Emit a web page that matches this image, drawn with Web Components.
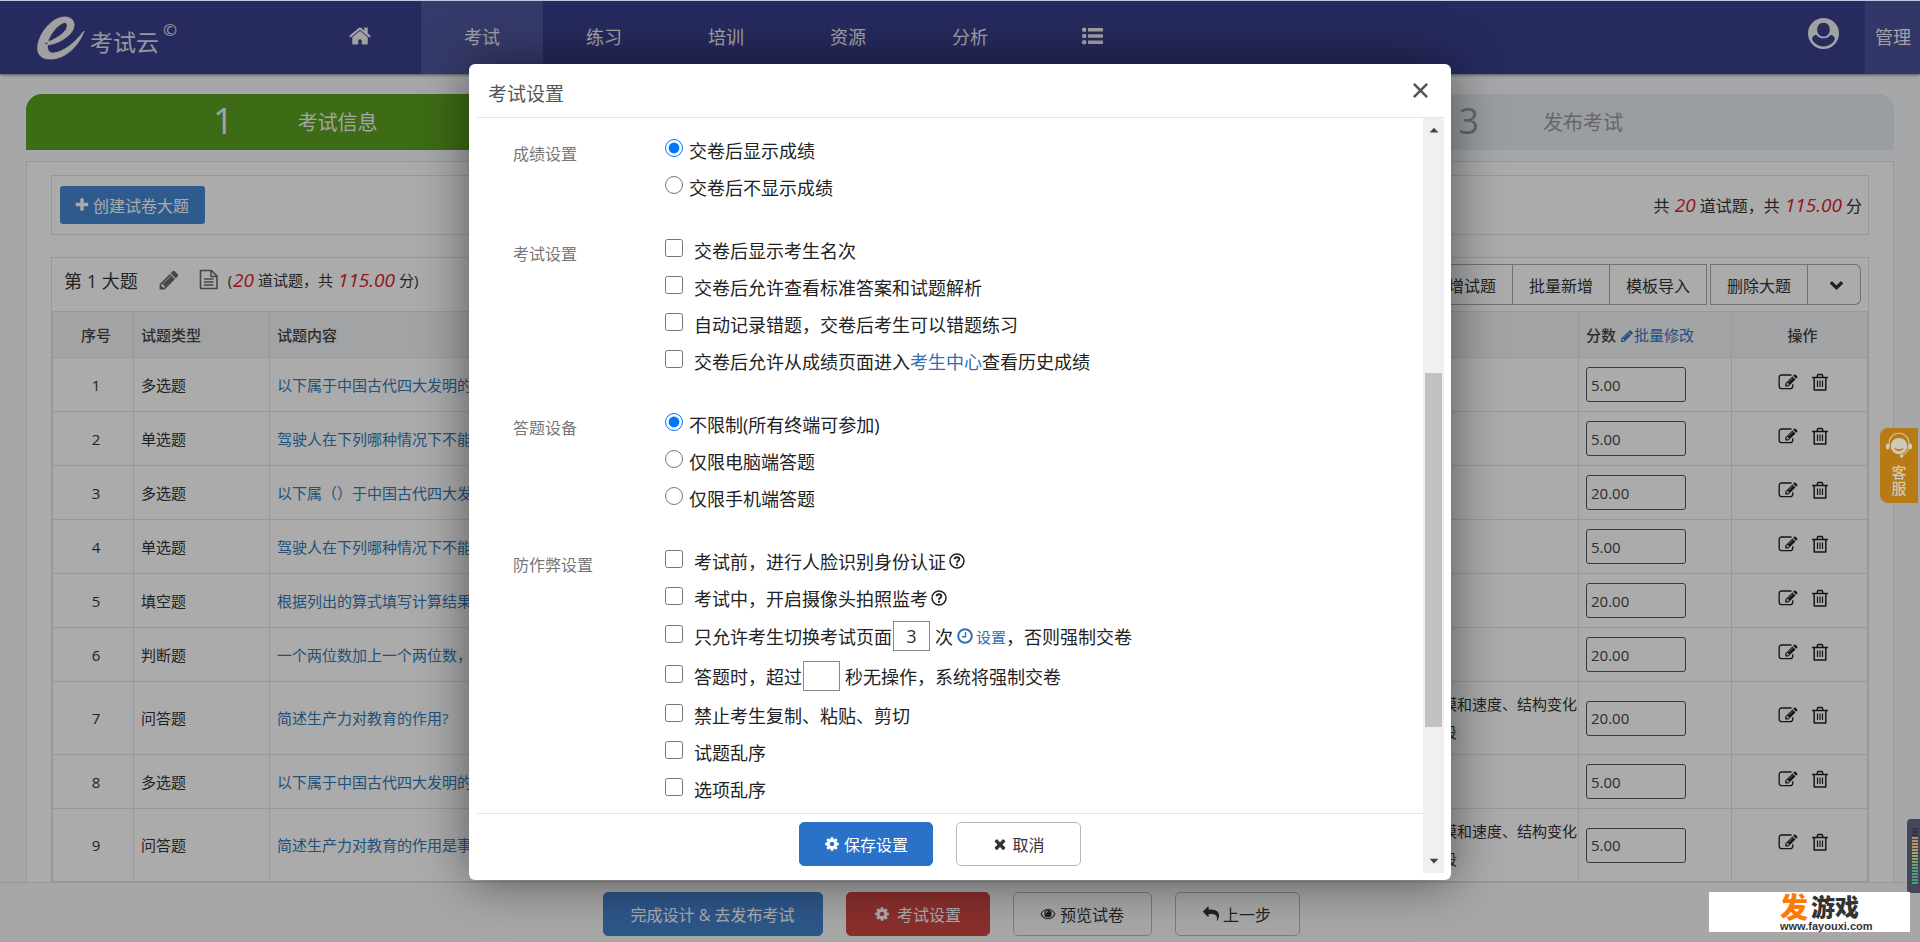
<!DOCTYPE html>
<html lang="zh-CN">
<head>
<meta charset="utf-8">
<title>考试云 - 考试设置</title>
<style>
  html, body { margin: 0; height: 100%; overflow: hidden; }
  body { font-family: "Open Sans", "Noto Sans CJK SC", sans-serif; font-size: 15px; color: #333; }
</style>
</head>
<body>
<exam-app></exam-app>

<script>
const define = (name, html, setup) => {
  const tpl = document.createElement('template');
  tpl.innerHTML = html;
  customElements.define(name, class extends HTMLElement {
    connectedCallback() {
      if (this.shadowRoot) return;
      const root = this.attachShadow({ mode: 'open' });
      root.append(tpl.content.cloneNode(true));
      if (setup) setup(this, root);
    }
  });
};

/* ---------- icons ---------- */
const ICONS = {
  home: '<path d="M1472 992v480q0 26-19 45t-45 19h-384v-384h-256v384h-384q-26 0-45-19t-19-45v-480q0-1 .5-3t.5-3l575-474 575 474q1 2 1 6zm223-69l-62 74q-8 9-21 11h-3q-13 0-21-7l-692-577-692 577q-12 8-24 7-13-2-21-11l-62-74q-8-10-7-23.5t11-21.5l719-599q32-26 76-26t76 26l244 204v-195q0-14 9-23t23-9h192q14 0 23 9t9 23v408l219 182q10 8 11 21.5t-7 23.5z"/>',
  plus: '<path d="M1600 736v192q0 40-28 68t-68 28h-416v416q0 40-28 68t-68 28h-192q-40 0-68-28t-28-68v-416h-416q-40 0-68-28t-28-68v-192q0-40 28-68t68-28h416v-416q0-40 28-68t68-28h192q40 0 68 28t28 68v416h416q40 0 68 28t28 68z"/>',
  pencil: '<path d="M491 1536l91-91-235-235-91 91v107h128v128h107zm523-928q0-22-22-22-10 0-17 7l-542 542q-7 7-7 17 0 22 22 22 10 0 17-7l542-542q7-7 7-17zm-54-192l416 416-832 832h-416v-416zm683 96q0 53-37 90l-166 166-416-416 166-165q36-38 90-38 53 0 91 38l235 234q37 39 37 91z"/>',
  cog: '<path d="M1152 896q0-106-75-181t-181-75-181 75-75 181 75 181 181 75 181-75 75-181zm512-109v222q0 12-8 23t-20 13l-185 28q-19 54-39 91 35 50 107 138 10 12 10 25t-9 23q-27 37-99 108t-94 71q-12 0-26-9l-138-108q-44 23-91 38-16 136-29 186-7 28-36 28h-222q-14 0-24.5-8.5t-11.5-21.5l-28-184q-49-16-90-37l-141 107q-10 9-25 9-14 0-25-11-126-114-165-168-7-10-7-23 0-12 8-23 15-21 51-66.5t54-70.5q-27-50-41-99l-183-27q-13-2-21-12.5t-8-23.5v-222q0-12 8-23t19-13l186-28q14-46 39-92-40-57-107-138-10-12-10-24 0-10 9-23 26-36 98.5-107.5t94.5-71.5q13 0 26 10l138 107q44-23 91-38 16-136 29-186 7-28 36-28h222q14 0 24.5 8.5t11.5 21.5l28 184q49 16 90 37l142-107q9-9 24-9 13 0 25 10 129 119 165 170 7 8 7 22 0 12-8 23-15 21-51 66.5t-54 70.5q26 50 41 98l183 28q13 2 21 12.5t8 23.5z"/>',
  times: '<path d="M1490 1322q0 40-28 68l-136 136q-28 28-68 28t-68-28l-294-294-294 294q-28 28-68 28t-68-28l-136-136q-28-28-28-68t28-68l294-294-294-294q-28-28-28-68t28-68l136-136q28-28 68-28t68 28l294 294 294-294q28-28 68-28t68 28l136 136q28 28 28 68t-28 68l-294 294 294 294q28 28 28 68z"/>',
  reply: '<g transform="translate(1792 0) scale(-1 1)"><path d="M1792 640q0 26-19 45l-512 512q-19 19-45 19t-45-19-19-45v-256h-224q-98 0-175.500 6t-154 21.500-133 42.500-105.500 69.500-80 101-48.500 138.500-17.500 181q0 55 5 123 0 6 2.500 23.500t2.500 26.500q0 15-8.500 25t-23.500 10q-16 0-28-17-7-9-13-22t-13.500-30-10.500-24q-127-285-127-451 0-199 53-333 162-403 875-403h224v-256q0-26 19-45t45-19 45 19l512 512q19 19 19 45z"/></g>',
  edit: '<path d="M888 1184l116-116-152-152-116 116v56h96v96h56zm440-720q-16-16-33 1l-350 350q-17 17-1 33t33-1l350-350q17-17 1-33zm80 594v190q0 119-84.500 203.500t-203.500 84.500h-832q-119 0-203.500-84.500t-84.500-203.500v-832q0-119 84.500-203.500t203.500-84.500h832q63 0 117 25 15 7 18 23 3 17-9 29l-49 49q-14 14-32 8-23-6-45-6h-832q-66 0-113 47t-47 113v832q0 66 47 113t113 47h832q66 0 113-47t47-113v-126q0-13 9-22l64-64q15-15 35-7t20 29zm-96-738l288 288-672 672h-288v-288zm444 132l-92 92-288-288 92-92q28-28 68-28t68 28l152 152q28 28 28 68t-28 68z"/>',
  list: '<g transform="scale(89.6)"><circle cx="2.200" cy="3.800" r="2.300"/><circle cx="2.200" cy="10" r="2.300"/><circle cx="2.200" cy="16.200" r="2.300"/><rect x="6" y="2" width="15" height="3.600" rx=".5"/><rect x="6" y="8.200" width="15" height="3.600" rx=".5"/><rect x="6" y="14.400" width="15" height="3.600" rx=".5"/></g>',
  trash: '<g transform="scale(99.5)" fill="none" stroke="currentColor" stroke-width="1.500"><path d="M1 4.500h16M3.200 4.500V17h11.600V4.500M6 4.200L6.800 1.500h4.400L12 4.200" stroke-linejoin="round"/><path d="M6.500 7.500v6.500M9 7.500v6.500M11.500 7.500v6.500" stroke-width="1.200"/></g>',
  doc: '<g transform="scale(89.6)" fill="none" stroke="currentColor" stroke-width="1.600"><path d="M1.500 1h11l5.500 5.500V19H1.500zM12 1v6h6" stroke-linejoin="round"/><path d="M5 9.500h9.500M5 12.500h9.500M5 15.500h9.500"/></g>',
  question: '<g transform="scale(112)" fill="none" stroke="currentColor" stroke-width="1.500"><circle cx="8" cy="8" r="7"/><path d="M5.600 6.200C5.700 3.500 10.300 3.500 10.300 6.200 10.300 7.800 8 7.900 8 9.800" stroke-width="1.900"/><path d="M8 10.800v1.900" stroke-width="2"/></g>',
  clock: '<g transform="scale(112)" fill="none" stroke="currentColor" stroke-width="2"><circle cx="8" cy="8" r="6.800"/><path d="M8.500 4v4.800H5" stroke-width="1.400"/></g>',
  eye: '<g transform="scale(99.5)"><path d="M9 3C5 3 2 5.500.5 9 2 12.500 5 15 9 15s7-2.500 8.500-6C16 5.500 13 3 9 3zm0 1.300c3.200 0 5.700 1.800 7.100 4.700-1.400 2.900-3.900 4.700-7.100 4.700S3.300 11.900 1.900 9C3.300 6.100 5.800 4.300 9 4.300z"/><circle cx="9" cy="8.600" r="4.200"/><path d="M6.500 8.500A2.600 2.600 0 0 1 9 6" fill="none" stroke="#fff" stroke-width=".9"/></g>',
  user: '<g transform="scale(56)"><path fill-rule="evenodd" d="M16 0a16 16 0 1 0 0 32 16 16 0 0 0 0-32zM8 26.600C3 23 3 19 8.500 17.300 10.500 20 13 21 16 21s5.500-1 7.500-3.700C29 19 29 23 24 26.600 19 30.200 13 30.200 8 26.600zM16 5c4 0 6.500 3 6.500 7s-2.500 7-6.500 7-6.500-3-6.500-7S12 5 16 5z"/></g>',
  chevron: '<path d="M300 660L896 1240 1492 660" fill="none" stroke="currentColor" stroke-width="340"/>',
  close: '<path d="M200 200L1592 1592M1592 200L200 1592" fill="none" stroke="currentColor" stroke-width="270"/>',
  up: '<path d="M100 1350L896 500 1692 1350z"/>',
  down: '<path d="M100 500L896 1350 1692 500z"/>',
  headset: '<g transform="scale(59.700)"><circle cx="15" cy="14" r="9.500"/><path d="M9 16c3 5 9 5 12 0-4 2-8 2-12 0z" fill="#b87a12"/><path d="M4 14a11.500 11.500 0 1 1 22 0c0 6-4 10-8 11" fill="none" stroke="currentColor" stroke-width="1.300"/><rect x="0" y="11" width="4" height="7" rx="2"/><rect x="26" y="11" width="4" height="7" rx="2"/><circle cx="18" cy="25.500" r="2"/></g>'
};
define('ex-icon', `
<style>
  :host { display: inline-block; flex: none; width: 16px; height: 16px; white-space: normal; }
  svg { display: block; width: 100%; height: 100%; overflow: visible; }
</style>
<svg viewBox="0 0 1792 1792" fill="currentColor" aria-hidden="true"></svg>`,
(host, root) => { root.querySelector('svg').innerHTML = ICONS[host.getAttribute('name')]; });

/* ---------- top navigation ---------- */
define('nav-item', `
<style>
  :host { display: block; flex: none; width: 122px; }
  a { display: flex; align-items: center; justify-content: center; box-sizing: border-box; height: 73px; padding-bottom: 3px; font-size: 18px; color: #f2f2f4; text-decoration: none; }
  :host([active]) a { background: #51579f; }
</style>
<a href="#"><slot></slot></a>`);

define('top-nav', `
<style>
  :host { display: block; flex: none; position: relative; background: #393f8d; color: #f2f2f4; border-top: 1px solid #b7cde6; box-shadow: 0 1px 3px rgba(0,0,0,.5); }
  nav { display: flex; align-items: center; height: 73px; }
  .brand { display: flex; align-items: center; width: 299px; padding-left: 36px; box-sizing: border-box; height: 73px; }
  .brand svg { width: 50px; height: 44px; }
  .brand b { font-size: 23px; font-weight: 400; margin: 8px 0 0 4px; line-height: 30px; color: #e0e1ea; }
  .brand sup { font-size: 17px; font-weight: 600; line-height: 20px; margin: -16px 0 0 4px; color: #d8d9e6; }
  .space { flex: 1; }
  .user { color: #f2f2f4; margin: 0 26px 8px 0; height: 31px; }
  .manage { display: flex; align-items: center; box-sizing: border-box; height: 73px; padding: 0 9px 3px 10px; background: #4c529a; color: #f2f2f4; font-size: 18px; text-decoration: none; }
</style>
<nav>
  <div class="brand">
    <svg viewBox="0 0 50 44" fill="#f0f0f0"><path fill-rule="evenodd" stroke="#f0f0f0" stroke-width=".8" d="M8 27C13 26 23 22 29 15 33 10 31 5 27 7 20 10 13 20 12 26 10 33 13 38 18 37 27 36 39 27 48 15 45 25 33 42 16 43 5 44 0 38 2 28 5 14 18 0 30 1 40 2 40 12 34 18 28 24 20 28 11 29z"/></svg>
    <b>考试云</b><sup>©</sup>
  </div>
  <nav-item><ex-icon name="home" style="width:24px;height:24px"></ex-icon></nav-item>
  <nav-item active>考试</nav-item>
  <nav-item>练习</nav-item>
  <nav-item>培训</nav-item>
  <nav-item>资源</nav-item>
  <nav-item>分析</nav-item>
  <nav-item><ex-icon name="list" style="width:24px;height:20px"></ex-icon></nav-item>
  <span class="space"></span>
  <ex-icon class="user" name="user" style="width:31px"></ex-icon>
  <a class="manage" href="#">管理</a>
</nav>`);

/* ---------- wizard steps ---------- */
define('step-bar', `
<style>
  :host { display: flex; height: 56px; margin-top: 20px; border-radius: 16px 16px 0 0; overflow: hidden; background: #e6ebf0; }
  div { flex: 1; display: flex; align-items: center; justify-content: center; gap: 64px; padding: 2px 84px 0 0; box-sizing: border-box; color: #999; font-size: 20px; line-height: 24px; }
  b { font-size: 36px; font-weight: 400; line-height: 50px; margin-bottom: 4px; }
  .on { background: #5ba021; color: #f4f4f4; }
</style>
<div class="on"><b>1</b>考试信息</div>
<div class="on"><b>2</b>设计试卷</div>
<div><b>3</b>发布考试</div>`);

/* ---------- question table ---------- */
const ROWS = [
  ['多选题', '以下属于中国古代四大发明的是', '5.00'],
  ['单选题', '驾驶人在下列哪种情况下不能', '5.00'],
  ['多选题', '以下属（）于中国古代四大发明', '20.00'],
  ['单选题', '驾驶人在下列哪种情况下不能', '5.00'],
  ['填空题', '根据列出的算式填写计算结果', '20.00'],
  ['判断题', '一个两位数加上一个两位数，', '20.00'],
  ['问答题', '简述生产力对教育的作用?', '20.00', '规模和速度、结构变化阶段'],
  ['多选题', '以下属于中国古代四大发明的是', '5.00'],
  ['问答题', '简述生产力对教育的作用是事', '5.00', '规模和速度、结构变化阶段']
];
define('question-table', `
<style>
  :host { display: block; }
  table { width: 100%; table-layout: fixed; border-collapse: collapse; font-size: 15px; }
  th, td { border: 1px solid #e2e3e4; padding: 0 1px 0 7px; text-align: left; line-height: 28px; }
  th { background: #f1f3f5; font-weight: 500; height: 45px; color: #444; }
  td { height: 53px; }
  tr.tall td { height: 72px; }
  th:first-child, td:first-child, th:last-child, td:last-child { text-align: center; }
  .c1 { width: 81px; } .c2 { width: 136px; } .c4 { width: 159px; } .c5 { width: 153px; } .c6 { width: 136px; }
  a { color: #337ab7; text-decoration: none; }
  td.q { white-space: nowrap; overflow: hidden; }
  th a { color: #3577c8; font-weight: 400; }
  th ex-icon { width: 14px; height: 14px; vertical-align: -2px; }
  input { display: block; box-sizing: border-box; width: 100px; height: 35px; border: 1px solid #555; border-radius: 3px; padding: 0 4px; background: transparent; font: inherit; color: #444; outline: 0; }
  .ops { display: flex; justify-content: center; gap: 13px; padding: 0 0 4px 2px; }
  button { padding: 0; border: 0; background: none; color: #222; display: block; height: 20px; }
  button ex-icon { width: 20px; height: 19px; }
  button.del ex-icon { width: 18px; height: 18px; }
</style>
<table>
  <colgroup><col class="c1"><col class="c2"><col><col class="c4"><col class="c5"><col class="c6"></colgroup>
  <thead><tr><th>序号</th><th>试题类型</th><th>试题内容</th><th></th><th>分数 <a href="#"><ex-icon name="pencil"></ex-icon>批量修改</a></th><th>操作</th></tr></thead>
  <tbody></tbody>
</table>`,
(host, root) => {
  root.querySelector('tbody').innerHTML = ROWS.map(([type, text, score, note], i) => `
    <tr${note ? ' class="tall"' : ''}><td>${i + 1}</td><td>${type}</td><td class="q"><a href="#">${text}</a></td><td>${note || ''}</td>
    <td><input type="text" value="${score}" aria-label="第${i + 1}题分数"></td>
    <td><div class="ops"><button type="button" aria-label="编辑"><ex-icon name="edit"></ex-icon></button><button type="button" class="del" aria-label="删除"><ex-icon name="trash"></ex-icon></button></div></td></tr>`).join('');
});

define('paper-section', `
<style>
  :host { display: block; margin-top: 22px; border: 1px solid #e2e3e4; }
  header { display: flex; justify-content: space-between; height: 53px; padding: 0 7px 0 12px; }
  .title { display: flex; align-items: center; height: 43px; white-space: pre; }
  .title strong { font-size: 18px; font-weight: 400; margin-right: 20px; }
  .title ex-icon { width: 22px; height: 22px; color: #6a6a6a; margin-right: 19px; }
  .title ex-icon.doc { width: 20px; height: 21px; margin-right: 9px; }
  em { font-size: 19px; color: #e0202c; margin: 0 4px 0 1px; }
  .tools { display: flex; margin-top: 6px; height: 41px; }
  .tools button { box-sizing: border-box; height: 41px; padding: 0 16px; border: 1px solid #aaa; border-left-width: 0; background: none; font: inherit; font-size: 16px; color: #333; }
  .tools .first { border-left-width: 1px; }
  .tools .gap { border-left-width: 1px; margin-left: 3px; }
  .tools .more { width: 53px; padding: 0 14px 0 20px; border-radius: 0 6px 6px 0; }
  .more ex-icon { width: 17px; height: 17px; display: block; }
</style>
<header>
  <div class="title"><strong>第 1 大题</strong><ex-icon name="pencil"></ex-icon><ex-icon class="doc" name="doc"></ex-icon>(<em>20</em>道试题，共 <em>115.00</em>分)</div>
  <div class="tools"><button type="button" class="first">新增试题</button><button type="button">批量新增</button><button type="button">模板导入</button><button type="button" class="gap">删除大题</button><button type="button" class="more" aria-label="更多"><ex-icon name="chevron"></ex-icon></button></div>
</header>
<slot></slot>`);

define('paper-panel', `
<style>
  :host { display: block; margin-top: 11px; padding: 13px 24px 0; background: #fff; border: 1px solid #dde0e4; }
  .bar { display: flex; align-items: center; justify-content: space-between; box-sizing: border-box; height: 60px; border: 1px solid #e2e3e4; padding: 0 6px 0 8px; font-size: 16px; }
  .bar button { display: flex; align-items: center; gap: 3px; height: 38px; padding: 0 16px 0 14px; border: 0; border-radius: 3px; background: #4687d4; color: #fff; font: inherit; }
  em { font-size: 19px; color: #e0202c; margin: 0 4px 0 1px; }
</style>
<div class="bar">
  <button type="button"><ex-icon name="plus"></ex-icon>创建试卷大题</button>
  <span>共 <em>20</em>道试题，共 <em>115.00</em>分</span>
</div>
<slot></slot>`);

/* ---------- push buttons shared by the footer and the dialog ---------- */
define('push-button', `
<style>
  :host { display: block; }
  button { display: flex; align-items: center; justify-content: center; box-sizing: border-box; width: 100%; height: 44px; padding: 0; gap: 4px; border: 1px solid #b8b8b8; border-radius: 5px; background: #fff; color: #333; font: inherit; font-size: 16px; white-space: nowrap; }
  :host([kind=primary]) button { background: #2a72c8; border-color: #2a72c8; color: #fff; }
  :host([kind=soft]) button { background: #4380cc; border-color: #4380cc; color: #fff; }
  :host([kind=danger]) button { background: #cc4643; border-color: #cc4643; color: #fff; gap: 7px; }
  :host([kind=clear]) button { background: none; }
</style>
<button type="button"><slot></slot></button>`);

define('page-footer', `
<style>
  :host { display: flex; justify-content: center; gap: 23px; box-sizing: border-box; flex: none; position: relative; height: 60px; padding: 9px 18px 0 0; border-top: 1px solid #e2e2e2; background: #fafafa; }
</style>
<push-button kind="soft" style="width:220px">完成设计 &amp; 去发布考试</push-button>
<push-button kind="danger" style="width:144px"><ex-icon name="cog"></ex-icon>考试设置</push-button>
<push-button kind="clear" style="width:139px"><ex-icon name="eye"></ex-icon>预览试卷</push-button>
<push-button kind="clear" style="width:125px"><ex-icon name="reply"></ex-icon>上一步</push-button>`);

/* ---------- settings dialog ---------- */
define('settings-group', `
<style>
  :host { display: flex; }
  .name { width: 152px; padding-top: 4px; font-size: 16px; line-height: 37px; color: #777; }
</style>
<div class="name"></div><div><slot></slot></div>`,
(host, root) => {
  host.setAttribute('role', 'group');
  host.setAttribute('aria-label', host.getAttribute('label'));
  root.querySelector('.name').textContent = host.getAttribute('label');
});

define('scroll-track', `
<style>
  :host { display: flex; flex-direction: column; align-items: center; flex: none; width: 21px; background: #f0f0f0; color: #444; }
  ex-icon { width: 10px; height: 10px; margin: 7px 0; }
  .before { flex: 231; } .thumb { flex: 354; width: 17px; background: #c1c1c1; } .after { flex: 122; }
</style>
<ex-icon name="up"></ex-icon><span class="before"></span><span class="thumb"></span><span class="after"></span><ex-icon name="down"></ex-icon>`);

define('settings-dialog', `
<style>
  :host { position: absolute; top: 64px; bottom: 62px; left: 50%; width: 982px; margin-left: -491px; display: flex; flex-direction: column; box-sizing: border-box; padding: 0 7px 7px 8px; background: #fff; border-radius: 6px; box-shadow: 1px 1px 50px rgba(0,0,0,.5); }
  header { display: flex; align-items: center; justify-content: space-between; flex: none; height: 54px; padding: 6px 15px 0 11px; box-sizing: border-box; font-size: 19px; line-height: 26px; color: #555; border-bottom: 1px solid #e5e5e5; }
  header button { border: 0; padding: 0 0 6px; background: none; color: #555; }
  header ex-icon { width: 17px; height: 17px; display: block; }
  .body { flex: 1; display: flex; min-height: 0; }
  .main { flex: 1; display: flex; flex-direction: column; }
  form { flex: 1; min-height: 0; overflow: hidden; display: flex; flex-direction: column; gap: 26px; padding: 14px 0 0 36px; }
  label { display: flex; align-items: center; box-sizing: border-box; height: 37px; padding-bottom: 2px; font-size: 18px; color: #222; white-space: nowrap; }
  label.wide { height: 40px; }
  label > input { width: 18px; height: 18px; margin: 0 11px 4px 0; flex: none; }
  label > input[type=radio] { margin-right: 6px; }
  label > input.num { box-sizing: border-box; width: 37px; height: 30px; margin: 0 5px 0 1px; border: 1px solid #888; padding: 0; text-align: center; font: inherit; color: #333; outline: 0; }
  label > ex-icon { margin-left: 3px; }
  a { color: #2f70b5; text-decoration: none; }
  a.set { display: flex; align-items: center; gap: 3px; margin-left: 4px; font-size: 15px; }
  footer { display: flex; justify-content: center; gap: 23px; flex: none; height: 60px; box-sizing: border-box; padding: 8px 20px 0 0; border-top: 1px solid #e5e5e5; }
</style>
<header>考试设置<button type="button" aria-label="关闭"><ex-icon name="close"></ex-icon></button></header>
<div class="body">
  <div class="main">
    <form>
      <settings-group label="成绩设置">
        <label><input type="radio" name="score" checked>交卷后显示成绩</label>
        <label><input type="radio" name="score">交卷后不显示成绩</label>
      </settings-group>
      <settings-group label="考试设置">
        <label><input type="checkbox">交卷后显示考生名次</label>
        <label><input type="checkbox">交卷后允许查看标准答案和试题解析</label>
        <label><input type="checkbox">自动记录错题，交卷后考生可以错题练习</label>
        <label><input type="checkbox">交卷后允许从成绩页面进入<a href="#">考生中心</a>查看历史成绩</label>
      </settings-group>
      <settings-group label="答题设备">
        <label><input type="radio" name="device" checked>不限制(所有终端可参加)</label>
        <label><input type="radio" name="device">仅限电脑端答题</label>
        <label><input type="radio" name="device">仅限手机端答题</label>
      </settings-group>
      <settings-group label="防作弊设置">
        <label><input type="checkbox">考试前，进行人脸识别身份认证<ex-icon name="question"></ex-icon></label>
        <label><input type="checkbox">考试中，开启摄像头拍照监考<ex-icon name="question"></ex-icon></label>
        <label class="wide"><input type="checkbox">只允许考生切换考试页面<input class="num" type="text" value="3" aria-label="切换次数">次<a class="set" href="#"><ex-icon name="clock"></ex-icon>设置</a>，否则强制交卷</label>
        <label class="wide"><input type="checkbox">答题时，超过<input class="num" type="text" value="" aria-label="无操作秒数">秒无操作，系统将强制交卷</label>
        <label><input type="checkbox">禁止考生复制、粘贴、剪切</label>
        <label><input type="checkbox">试题乱序</label>
        <label><input type="checkbox">选项乱序</label>
      </settings-group>
    </form>
    <footer>
      <push-button kind="primary" style="width:134px"><ex-icon name="cog"></ex-icon>保存设置</push-button>
      <push-button style="width:125px"><ex-icon name="times"></ex-icon>取消</push-button>
    </footer>
  </div>
  <scroll-track></scroll-track>
</div>`);

/* ---------- floating widgets ---------- */
define('service-badge', `
<style>
  :host { position: absolute; right: 2px; top: 428px; width: 38px; height: 75px; box-sizing: border-box; padding-top: 6px; border-radius: 8px 0 0 8px; background: #b87a12; color: #d0c8b8; display: flex; flex-direction: column; align-items: center; gap: 4px; font-size: 15px; line-height: 16px; font-weight: 500; }
  ex-icon { width: 28px; height: 26px; }
  span { width: 15px; }
</style>
<ex-icon name="headset"></ex-icon><span>客服</span>`);

define('level-meter', `
<style>
  :host { position: absolute; right: 0; top: 819px; width: 13px; height: 74px; box-sizing: border-box; padding: 9px 2px 8px 5px; border-radius: 4px 0 0 4px; background: #454659; }
  div { height: 100%; background: repeating-linear-gradient(transparent 0 2px, #454659 2px 3px), linear-gradient(#33344a 0 15%, #b98f60 16%, #a9a860 45%, #4fa27c 75%, #3ba08a); }
</style>
<div></div>`);

define('site-mark', `
<style>
  :host { position: absolute; right: 10px; bottom: 10px; width: 201px; height: 40px; box-sizing: border-box; padding-left: 71px; background: #fff; }
  .name { display: flex; align-items: center; gap: 3px; height: 28px; padding-top: 1px; box-sizing: border-box; font-size: 24px; font-weight: 900; line-height: 28px; color: #333; }
  b { font-size: 28px; font-weight: 900; color: #ff7a00; }
  small { display: block; font: bold 11px/12px "Liberation Sans", sans-serif; color: #333; }
</style>
<div class="name"><b>发</b>游戏</div><small>www.fayouxi.com</small>`);

/* ---------- page ---------- */
define('exam-app', `
<style>
  :host { display: flex; flex-direction: column; height: 100vh; background: #f7f9fd; position: relative; overflow: hidden; }
  main { flex: 1; min-height: 0; overflow: hidden; padding: 0 26px; }
  .shade { position: absolute; inset: 1px 0 0; background: rgba(0,0,0,.33); }
</style>
<top-nav></top-nav>
<main>
  <step-bar></step-bar>
  <paper-panel><paper-section><question-table></question-table></paper-section></paper-panel>
</main>
<page-footer></page-footer>
<div class="shade"></div>
<service-badge></service-badge>
<settings-dialog></settings-dialog>
<level-meter></level-meter>
<site-mark></site-mark>`);
</script>
</body>
</html>
